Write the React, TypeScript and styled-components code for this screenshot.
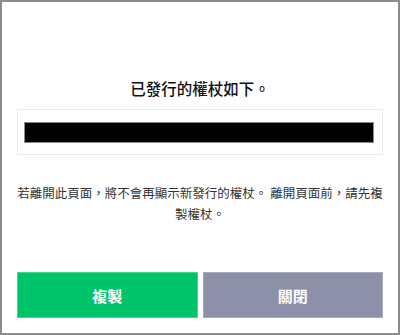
import styled, { createGlobalStyle } from 'styled-components'

const GlobalStyle = createGlobalStyle`
  html, body {
    margin: 0;
    padding: 0;
    background: #fff;
  }
  body {
    font-family: "Noto Sans CJK TC", "Noto Sans", sans-serif;
  }
`

const Dialog = styled.div`
  box-sizing: border-box;
  width: 400px;
  height: 335px;
  border: 2px solid #8c8c8c;
  background: #fff;
  padding: 74px 15px 15px;
  display: flex;
  flex-direction: column;
`

const Title = styled.h2`
  margin: 0;
  font-size: 15.5px;
  line-height: 24px;
  font-weight: 500;
  color: #111;
  text-align: center;
`

const TokenBox = styled.div`
  margin-top: 9px;
  border: 1px solid #ebebeb;
  padding: 12px 8px 11px 6px;
`

const TokenBar = styled.div`
  height: 21px;
  box-sizing: border-box;
  background: #000;
  border: 1px solid #8a8a8a;
`

const Notice = styled.p`
  margin: 28px -3px 0;
  font-size: 12.5px;
  line-height: 20.5px;
  color: #333;
  text-align: center;
`

const Actions = styled.div`
  margin-top: auto;
  display: grid;
  grid-template-columns: 1fr 1fr;
  gap: 5px;
`

const ActionButton = styled.button<{ $tone: 'primary' | 'muted' }>`
  height: 46px;
  border: 1px solid ${p => (p.$tone === 'primary' ? '#3fd88d' : '#a9acc0')};
  background: ${p => (p.$tone === 'primary' ? '#00c46a' : '#8c91a9')};
  color: #fff;
  font-family: inherit;
  font-size: 15px;
  font-weight: 700;
  cursor: pointer;
  padding: 0;
`

const App = () => {
  return (
    <>
      <GlobalStyle />
      <Dialog>
        <Title>已發行的權杖如下。</Title>
        <TokenBox>
          <TokenBar />
        </TokenBox>
        <Notice>若離開此頁面，將不會再顯示新發行的權杖。 離開頁面前，請先複製權杖。</Notice>
        <Actions>
          <ActionButton $tone="primary">複製</ActionButton>
          <ActionButton $tone="muted">關閉</ActionButton>
        </Actions>
      </Dialog>
    </>
  )
}

export default App
